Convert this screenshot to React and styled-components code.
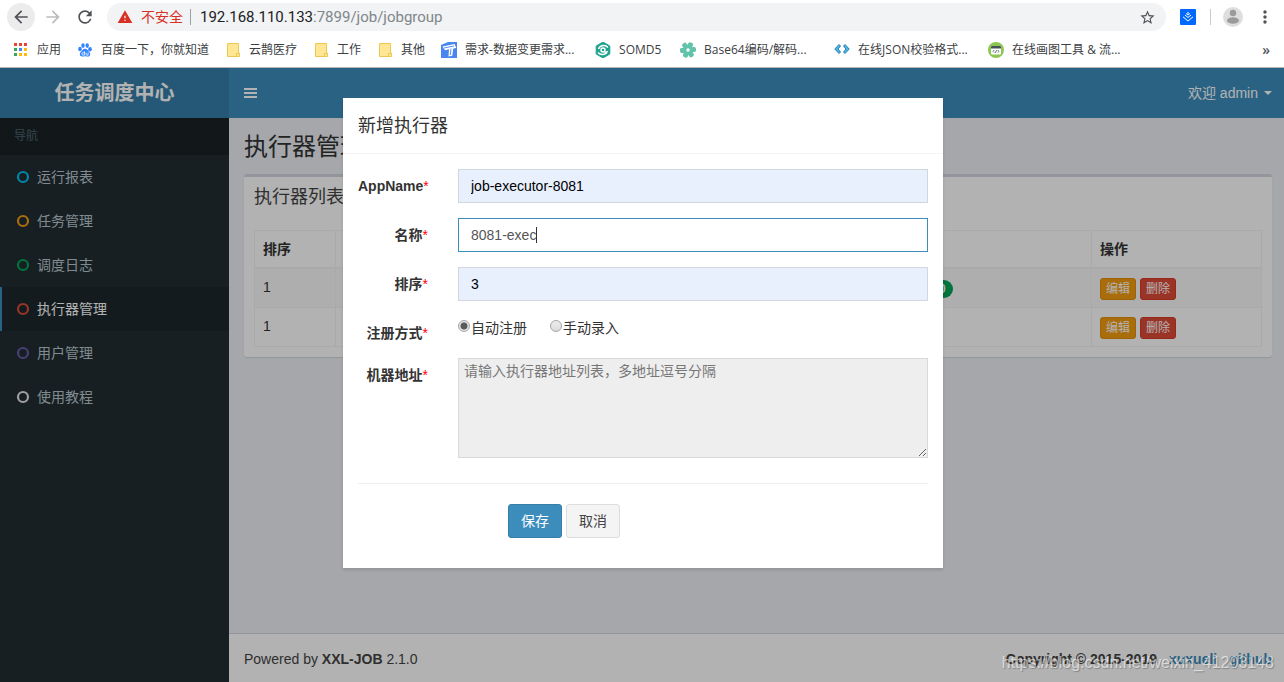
import React, { useEffect, useRef } from "react";
import styled, { createGlobalStyle } from "styled-components";

import {
    MdArrowBack,
    MdArrowForward,
    MdRefresh,
    MdWarning,
    MdStarBorder,
    MdMoreVert,
} from "react-icons/md";

const GlobalStyle = createGlobalStyle`
    *, *::before, *::after {
        box-sizing: border-box;
    }
    body {
        margin: 0;
        font-family: "Liberation Sans", "Noto Sans CJK SC", sans-serif;
        font-size: 14px;
        line-height: 20px;
        color: #333;
    }
    button, input, textarea {
        font: inherit;
    }
    a {
        color: #3c8dbc;
        text-decoration: none;
    }
`;

const Screen = styled.div`
    display: flex;
    flex-direction: column;
    min-height: 100vh;
`;

/* ---------- browser bar ---------- */

const Chrome = styled.div`
    background: #fff;
    border-bottom: 1px solid #b4b4b4;
    font-family: "Open Sans", "Noto Sans CJK SC", sans-serif;
`;
const Toolbar = styled.div`
    display: flex;
    align-items: center;
    height: 34px;
    padding: 0 9px 0 7px;
`;
const NavButtons = styled.div`
    display: flex;
    gap: 4px;
    margin-right: 8px;
`;
const ToolButton = styled.button`
    display: flex;
    align-items: center;
    justify-content: center;
    width: 28px;
    height: 28px;
    padding: 0;
    border: 0;
    border-radius: 50%;
    background: ${({ $active }) => ($active ? "#ececec" : "transparent")};
    color: ${({ $muted }) => ($muted ? "#babcbe" : "#505357")};
    font-size: 20px;
`;
const Omnibox = styled.div`
    display: flex;
    flex: 1;
    align-items: center;
    height: 28px;
    margin-right: 14px;
    padding: 0 10px;
    border-radius: 14px;
    background: #f1f3f4;
    color: #80868b;
    svg {
        flex: none;
    }
`;
const Unsafe = styled.span`
    display: flex;
    align-items: center;
    gap: 8px;
    padding-right: 7px;
    border-right: 1px solid #9aa0a6;
    line-height: 16px;
    color: #d93025;
`;
const Url = styled.span`
    flex: 1;
    padding-left: 9px;
    font-family: Roboto, "Open Sans", sans-serif;
    font-size: 15px;
    b {
        font-weight: 400;
        color: #202124;
    }
`;
const Extension = styled.button`
    display: flex;
    padding: 0;
    border: 0;
    background: none;
`;
const Separator = styled.span`
    width: 1px;
    height: 16px;
    margin: 0 12px 0 14px;
    background: #c8cacc;
`;
const MenuButton = styled(Extension)`
    margin-left: 12px;
    color: #505357;
    font-size: 20px;
`;
const Bookmarks = styled.nav`
    display: flex;
    align-items: center;
    gap: 16px;
    height: 33px;
    padding: 0 14px 2px 13px;
    font-size: 12px;
`;
const Bookmark = styled.a`
    display: flex;
    align-items: center;
    gap: 8px;
    color: #3c4043;
    white-space: nowrap;
    svg {
        flex: none;
    }
    span {
        width: ${({ $width }) => $width || "auto"};
    }
`;
const More = styled.button`
    margin-left: auto;
    padding: 0;
    border: 0;
    background: none;
    font-size: 14px;
    font-weight: 600;
    color: #505357;
`;

/* ---------- admin page ---------- */

const Admin = styled.div`
    position: relative;
    display: flex;
    flex: 1;
`;
const Sidebar = styled.aside`
    flex: none;
    width: 229px;
    background: #222d32;
`;
const Logo = styled.a`
    display: block;
    background: #367fa9;
    color: #fff;
    font-size: 20px;
    font-weight: 700;
    line-height: 50px;
    text-align: center;
`;
const NavTitle = styled.div`
    padding: 10px 14px;
    background: #1a2226;
    color: #4b646f;
    font-size: 12px;
    line-height: 17px;
`;
const NavLink = styled.a`
    display: flex;
    align-items: center;
    gap: 1px;
    padding: 12px 14px;
    border-left: 2px solid ${({ $active }) => ($active ? "#3c8dbc" : "transparent")};
    background: ${({ $active }) => ($active ? "#1e282c" : "transparent")};
    color: ${({ $active }) => ($active ? "#fff" : "#b8c7ce")};
`;
const Main = styled.div`
    display: flex;
    flex: 1;
    flex-direction: column;
    background: #ecf0f5;
`;
const Navbar = styled.header`
    display: flex;
    align-items: center;
    justify-content: space-between;
    height: 50px;
    padding: 0 12px 0 15px;
    background: #3c8dbc;
`;
const NavbarButton = styled.button`
    display: flex;
    align-items: center;
    gap: 6px;
    padding: 0;
    border: 0;
    background: none;
    color: #fff;
`;
const CaretDown = styled.i`
    border-top: 4px solid;
    border-left: 4px solid transparent;
    border-right: 4px solid transparent;
`;
const Content = styled.main`
    flex: 1;
    padding: 15px 12px 15px 15px;
`;
const PageTitle = styled.h1`
    margin: 0 0 13px;
    font-size: 24px;
    font-weight: 400;
    line-height: 28px;
`;
const Box = styled.section`
    padding: 10px;
    border-top: 3px solid #d2d6de;
    border-radius: 3px;
    background: #fff;
    box-shadow: 0 1px 1px rgba(0, 0, 0, 0.1);
`;
const BoxTitle = styled.h3`
    margin: 0 0 23px;
    color: #444;
    font-size: 18px;
    font-weight: 400;
    line-height: 20px;
`;
const Table = styled.table`
    width: 100%;
    table-layout: fixed;
    border-collapse: collapse;
    th, td {
        padding: 8px;
        border: 1px solid #f4f4f4;
        text-align: left;
        vertical-align: top;
    }
    th {
        border-bottom-width: 2px;
    }
    td:nth-child(n + 3) {
        padding: 9px 8px 7px;
    }
    tbody tr:nth-child(odd) {
        background: #f9f9f9;
    }
`;
const Badge = styled.span`
    display: inline-block;
    margin-top: 2px;
    padding: 3px 7px;
    border-radius: 10px;
    background: #00a65a;
    color: #fff;
    font-size: 12px;
    font-weight: 700;
    line-height: 12px;
    vertical-align: top;
`;
const RowActions = styled.div`
    display: flex;
    gap: 4px;
`;
const SmallButton = styled.button`
    padding: 1px 5px;
    border: 1px solid ${({ $danger }) => ($danger ? "#d73925" : "#e08e0b")};
    border-radius: 3px;
    background: ${({ $danger }) => ($danger ? "#dd4b39" : "#f39c12")};
    color: #fff;
    font-size: 12px;
    line-height: 18px;
`;
const Footer = styled.footer`
    display: flex;
    justify-content: space-between;
    padding: 15px 12px 13px 15px;
    border-top: 1px solid #d2d6de;
    background: #fff;
    color: #444;
`;
const Copyright = styled.strong`
    display: flex;
    gap: 12px;
`;

/* ---------- modal ---------- */

const Backdrop = styled.div`
    position: absolute;
    inset: 0;
    display: flex;
    align-items: flex-start;
    justify-content: center;
    padding: 30px 0 30px 2px;
    background: rgba(0, 0, 0, 0.3);
`;
const Modal = styled.div`
    width: 100%;
    max-width: 600px;
    background: #fff;
    box-shadow: 0 2px 3px rgba(0, 0, 0, 0.125);
`;
const ModalTitle = styled.h4`
    margin: 0;
    padding: 16px 15px 14px;
    border-bottom: 1px solid #f4f4f4;
    font-size: 18px;
    font-weight: 400;
    line-height: 25px;
`;
const Form = styled.form`
    padding: 15px 15px 30px;
`;
const Group = styled.div`
    display: grid;
    grid-template-columns: 70px 1fr;
    column-gap: 30px;
    align-items: start;
    margin-bottom: 15px;
`;
const Label = styled.label`
    padding-top: 7px;
    font-weight: 700;
    text-align: right;
    white-space: nowrap;
    span {
        color: red;
        font-weight: 400;
    }
`;
const Field = styled.div`
    position: relative;
`;
const Input = styled.input`
    display: block;
    width: 100%;
    height: 34px;
    padding: 6px 12px;
    border: 1px solid #d2d6de;
    border-radius: 0;
    outline: 0;
    background: ${({ $filled }) => ($filled ? "#e8f0fe" : "#fff")};
    color: ${({ $filled }) => ($filled ? "#000" : "#555")};
    caret-color: transparent;
    &:focus {
        border-color: #3c8dbc;
    }
`;
const TextCaret = styled.i`
    position: absolute;
    top: 9px;
    left: 78px;
    width: 1px;
    height: 16px;
    background: #333;
    pointer-events: none;
`;
const RadioRow = styled.div`
    display: flex;
    gap: 23px;
`;
const RadioLabel = styled.label`
    display: flex;
    align-items: flex-start;
    gap: 1px;
    line-height: 24px;
`;
const Radio = styled.input`
    appearance: none;
    width: 12px;
    height: 12px;
    margin: 4px 0 0;
    border: 1px solid #a6a6a6;
    border-radius: 50%;
    background: linear-gradient(#ececec, #dcdcdc);
    &:checked {
        background: radial-gradient(circle, #5a5a5a 0 3px, #e4e4e4 4px);
    }
`;
const TextArea = styled.textarea`
    display: block;
    width: 100%;
    height: 100px;
    padding: 2px 5px;
    border: 1px solid #d9d9d9;
    border-radius: 0;
    background: #eee;
    &::placeholder {
        color: #777;
    }
`;
const Divider = styled.hr`
    margin: 25px 0 20px;
    border: 0;
    border-top: 1px solid #eee;
`;
const Buttons = styled.div`
    display: flex;
    gap: 4px;
    padding-left: 150px;
`;
const Button = styled.button`
    padding: 6px 12px;
    border: 1px solid ${({ $primary }) => ($primary ? "#367fa9" : "#ddd")};
    border-radius: 3px;
    background: ${({ $primary }) => ($primary ? "#3c8dbc" : "#f4f4f4")};
    color: ${({ $primary }) => ($primary ? "#fff" : "#444")};
`;
const Watermark = styled.div`
    position: absolute;
    right: 10px;
    bottom: 9px;
    color: rgba(255, 255, 255, 0.6);
    font-size: 16px;
    text-shadow: 1px 1px 1px rgba(0, 0, 0, 0.25);
    pointer-events: none;
`;

/* ---------- icons ---------- */

const Icon = ({ children }) => (
    <svg width="16" height="16" viewBox="0 0 16 16" aria-hidden="true">
        {children}
    </svg>
);

const appColors = ["#ea4335", "#ea4335", "#ea4335", "#34a853", "#4285f4", "#fbbc05", "#34a853", "#fbbc05", "#fbbc05"];

const AppsIcon = () => (
    <Icon>
        {appColors.map((color, i) => (
            <rect key={i} x={1 + (i % 3) * 5} y={1 + Math.floor(i / 3) * 5} width="3" height="3" fill={color} />
        ))}
    </Icon>
);
const PawIcon = () => (
    <Icon>
        <g fill="#3385ff">
            <ellipse cx="3" cy="7" rx="1.8" ry="2.3" />
            <ellipse cx="6" cy="3.6" rx="1.7" ry="2.4" />
            <ellipse cx="10.2" cy="3.6" rx="1.7" ry="2.4" />
            <ellipse cx="13" cy="7.2" rx="1.8" ry="2.2" />
            <path d="M8 6.8c-2 0-2.6 1.8-4 3-1.900 1.700-1.400 4.700 1.200 4.700 1.200 0 1.700-.3 2.800-.3s1.600.3 2.800.3c2.600 0 3.300-2.800 1.400-4.600C10.800 8.600 10 6.800 8 6.800z" />
        </g>
        <path d="M7.400 9.200v4H6.200a1.300 1.300 0 0 1 0-2.600h1.200M9 10.600v1.800q0 .8.800.8h1.300v-2.600" fill="none" stroke="#fff" strokeWidth=".8" />
    </Icon>
);
const FolderIcon = () => (
    <Icon>
        <path d="M2.500 1.500h11v9.500h1v3.500h-12z" fill="#ffe694" stroke="#ebc850" />
        <path d="M11.500 14.500v-3h2" fill="none" stroke="#ebc850" />
    </Icon>
);
const TIcon = () => (
    <Icon>
        <path d="M0 0h16v16H0z" fill="#4a86f0" />
        <path d="M0 0h7L0 3zM1.500 4.500 13.500 2l1.800 4-3 .6-1 7.200-3.800.8L8 7.300l-4 1z" fill="#fff" />
        <path d="M3 6 13 4M10 6.500 9.300 13" stroke="#4a86f0" strokeWidth=".9" />
    </Icon>
);
const Md5Icon = () => (
    <Icon>
        <path d="M8 0l6.800 4v8L8 16l-6.800-4V4z" fill="#1fa38e" stroke="#1fa38e" strokeLinejoin="round" />
        <path d="M13 5.500C10.500 2.500 5 2.800 3.500 7M3 10.500c2.500 3 8 2.700 9.500-1.500" fill="none" stroke="#fff" strokeWidth="1.400" />
        <circle cx="8" cy="8" r="2" fill="none" stroke="#fff" strokeWidth="1.400" />
        <path d="M9.500 9.500l2 2" stroke="#fff" strokeWidth="1.300" />
    </Icon>
);
const GearIcon = () => (
    <Icon>
        <g fill="#62c3ad">
            <circle cx="8" cy="8" r="5.200" />
            {[0, 60, 120, 180, 240, 300].map((a) => (
                <rect key={a} x="5.500" y="0" width="5" height="5" rx="1.800" transform={`rotate(${a + 25} 8 8)`} />
            ))}
        </g>
        <circle cx="8" cy="8" r="1.700" fill="#fff" />
    </Icon>
);
const AnglesIcon = () => (
    <Icon>
        <g fill="#4fb9ea" stroke="#1572a8" strokeWidth=".9" strokeLinejoin="round">
            <path d="M5 2.500.8 7 5 11.500l1.500-1.500L4 7l2.500-3z" />
            <path d="M11 2.500 15.200 7 11 11.500 9.500 10 12 7 9.500 4z" />
        </g>
    </Icon>
);
const DrawIcon = () => (
    <Icon>
        <circle cx="8" cy="8" r="8" fill="#8cc751" />
        <rect x="3" y="4" width="10" height="8.500" rx="1" fill="#fff" />
        <path d="M3 5a1 1 0 0 1 1-1h8a1 1 0 0 1 1 1v1.500H3z" fill="#47525b" />
        <path d="M6.300 8 5 9.400l1.300 1.300M9.700 8 11 9.400l-1.300 1.300M8.500 8l-1 3" fill="none" stroke="#47525b" strokeWidth=".8" />
    </Icon>
);
const RingIcon = ({ color }) => (
    <svg width="20" height="14" viewBox="0 0 20 14" aria-hidden="true">
        <circle cx="7" cy="7" r="5" fill="none" stroke={color} strokeWidth="2.200" />
    </svg>
);

const bookmarks = [
    { title: "应用", icon: <AppsIcon /> },
    { title: "百度一下，你就知道", icon: <PawIcon /> },
    { title: "云鹊医疗", icon: <FolderIcon /> },
    { title: "工作", icon: <FolderIcon /> },
    { title: "其他", icon: <FolderIcon /> },
    { title: "需求-数据变更需求...", icon: <TIcon />, width: "114px" },
    { title: "SOMD5", icon: <Md5Icon />, width: "45px" },
    { title: "Base64编码/解码...", icon: <GearIcon />, width: "114px" },
    { title: "在线JSON校验格式...", icon: <AnglesIcon />, width: "114px" },
    { title: "在线画图工具 & 流...", icon: <DrawIcon />, width: "114px" },
];

const navItems = [
    { title: "运行报表", color: "#00c0ef" },
    { title: "任务管理", color: "#f39c12" },
    { title: "调度日志", color: "#00a65a" },
    { title: "执行器管理", color: "#dd4b39", active: true },
    { title: "用户管理", color: "#605ca8" },
    { title: "使用教程", color: "#e4e4ea" },
];

const rows = [
    { id: 1, order: 1, online: "0" },
    { id: 2, order: 1 },
];

const BrowserBar = () => (
    <Chrome>
        <Toolbar>
            <NavButtons>
                <ToolButton $active aria-label="后退"><MdArrowBack /></ToolButton>
                <ToolButton $muted aria-label="前进"><MdArrowForward /></ToolButton>
                <ToolButton aria-label="刷新"><MdRefresh /></ToolButton>
            </NavButtons>
            <Omnibox>
                <Unsafe><MdWarning size={16} />不安全</Unsafe>
                <Url><b>192.168.110.133</b>:7899/job/jobgroup</Url>
                <MdStarBorder size={17} color="#505357" />
            </Omnibox>
            <Extension aria-label="扩展程序">
                <Icon>
                    <rect width="16" height="16" rx="1" fill="#0068ff" />
                    <path d="M8 3.500l1.500 1.300L8 6 6.500 4.800zM5 6l3 2.500L11 6M3 7.800l5 4.200 5-4.200" fill="none" stroke="#fff" />
                </Icon>
            </Extension>
            <Separator />
            <Extension aria-label="用户">
                <svg width="20" height="20" viewBox="0 0 20 20">
                    <circle cx="10" cy="10" r="10" fill="#dedede" />
                    <circle cx="10" cy="6" r="3.200" fill="#9b9b9b" />
                    <ellipse cx="10" cy="13.500" rx="6" ry="3.200" fill="#9b9b9b" />
                </svg>
            </Extension>
            <MenuButton aria-label="菜单"><MdMoreVert /></MenuButton>
        </Toolbar>
        <Bookmarks>
            {bookmarks.map(({ title, icon, width }) => (
                <Bookmark key={title} href="/#" $width={width}>
                    {icon}
                    <span>{title}</span>
                </Bookmark>
            ))}
            <More>»</More>
        </Bookmarks>
    </Chrome>
);

const ExecutorModal = () => {
    const nameRef = useRef(null);

    useEffect(() => {
        nameRef.current.focus();
    }, []);

    return (
        <Modal role="dialog" aria-labelledby="modal-title">
            <ModalTitle id="modal-title">新增执行器</ModalTitle>
            <Form>
                <Group>
                    <Label htmlFor="appName">AppName<span>*</span></Label>
                    <Input id="appName" $filled defaultValue="job-executor-8081" />
                </Group>
                <Group>
                    <Label htmlFor="title">名称<span>*</span></Label>
                    <Field>
                        <Input id="title" ref={nameRef} defaultValue="8081-exec" />
                        <TextCaret />
                    </Field>
                </Group>
                <Group>
                    <Label htmlFor="order">排序<span>*</span></Label>
                    <Input id="order" $filled defaultValue="3" />
                </Group>
                <Group role="radiogroup" aria-labelledby="addressType">
                    <Label as="span" id="addressType">注册方式<span>*</span></Label>
                    <RadioRow>
                        <RadioLabel><Radio type="radio" name="addressType" defaultChecked />自动注册</RadioLabel>
                        <RadioLabel><Radio type="radio" name="addressType" />手动录入</RadioLabel>
                    </RadioRow>
                </Group>
                <Group>
                    <Label htmlFor="addressList">机器地址<span>*</span></Label>
                    <TextArea id="addressList" readOnly placeholder="请输入执行器地址列表，多地址逗号分隔" />
                </Group>
                <Divider />
                <Buttons>
                    <Button type="button" $primary>保存</Button>
                    <Button type="button">取消</Button>
                </Buttons>
            </Form>
        </Modal>
    );
};

const App = () => (
    <Screen>
        <GlobalStyle />
        <BrowserBar />
        <Admin>
            <Sidebar>
                <Logo href="/#">任务调度中心</Logo>
                <NavTitle>导航</NavTitle>
                <nav>
                    {navItems.map(({ title, color, active }) => (
                        <NavLink key={title} href="/#" $active={active}>
                            <RingIcon color={color} />
                            {title}
                        </NavLink>
                    ))}
                </nav>
            </Sidebar>
            <Main>
                <Navbar>
                    <NavbarButton aria-label="切换导航">
                        <svg width="13" height="10" viewBox="0 0 13 10">
                            <path d="M0 1h13M0 5h13M0 9h13" stroke="#fff" strokeWidth="2" />
                        </svg>
                    </NavbarButton>
                    <NavbarButton>欢迎 admin<CaretDown /></NavbarButton>
                </Navbar>
                <Content>
                    <PageTitle>执行器管理</PageTitle>
                    <Box>
                        <BoxTitle>执行器列表</BoxTitle>
                        <Table>
                            <colgroup>
                                <col width="8%" />
                                <col />
                                <col width="168" />
                                <col width="170" />
                            </colgroup>
                            <thead>
                                <tr>
                                    <th>排序</th>
                                    <th />
                                    <th />
                                    <th>操作</th>
                                </tr>
                            </thead>
                            <tbody>
                                {rows.map(({ id, order, online }) => (
                                    <tr key={id}>
                                        <td>{order}</td>
                                        <td />
                                        <td>{online && <Badge>{online}</Badge>}</td>
                                        <td>
                                            <RowActions>
                                                <SmallButton>编辑</SmallButton>
                                                <SmallButton $danger>删除</SmallButton>
                                            </RowActions>
                                        </td>
                                    </tr>
                                ))}
                            </tbody>
                        </Table>
                    </Box>
                </Content>
                <Footer>
                    <span>Powered by <b>XXL-JOB</b> 2.1.0</span>
                    <Copyright>
                        Copyright © 2015-2019
                        <a href="/#">xuxueli</a>
                        <a href="/#">github</a>
                    </Copyright>
                </Footer>
            </Main>
            <Backdrop>
                <ExecutorModal />
            </Backdrop>
            <Watermark>https://blog.csdn.net/weixin_41203148</Watermark>
        </Admin>
    </Screen>
);

export default App;
